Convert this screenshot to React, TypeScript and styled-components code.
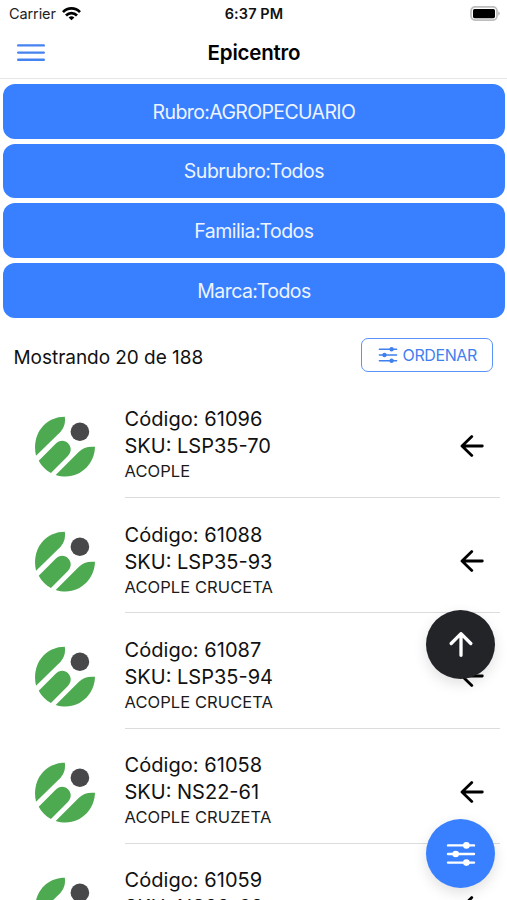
import React from "react";
import styled, { createGlobalStyle } from "styled-components";

const BLUE = "#3880ff";

const GlobalStyle = createGlobalStyle`
  * { box-sizing: border-box; }
  body { margin: 0; background: #fff; overflow: hidden; }
  button { font: inherit; margin: 0; padding: 0; cursor: pointer; }
  svg { display: block; flex: none; }
`;

const Screen = styled.div`
  position: relative;
  width: 100%;
  height: 900px;
  overflow: hidden;
  background: #fff;
  color: #111;
  font-family: Inter, "Liberation Sans", sans-serif;
`;

const StatusBar = styled.div`
  display: grid;
  grid-template-columns: 1fr auto 1fr;
  align-items: center;
  height: 27px;
  padding: 0 6px 0 9px;
`;

const Carrier = styled.div`
  display: flex;
  align-items: center;
  gap: 6px;
  font-size: 14.5px;
  letter-spacing: -0.1px;
  color: #222;
`;

const Clock = styled.div`
  margin-right: 2px;
  font-size: 14.5px;
  font-weight: 600;
  letter-spacing: 0.1px;
`;

const BatterySlot = styled.div`
  justify-self: end;
`;

const Toolbar = styled.header`
  display: grid;
  grid-template-columns: 1fr auto 1fr;
  align-items: center;
  height: 52px;
  padding: 0 17px;
  border-bottom: 1px solid #e6e6e8;
`;

const MenuButton = styled.button`
  justify-self: start;
  border: 0;
  background: none;
`;

const Title = styled.h1`
  margin: 0 0 0 1px;
  font-size: 20.5px;
  font-weight: 600;
  letter-spacing: -0.2px;
  color: #000;
`;

const Filters = styled.div`
  display: flex;
  flex-direction: column;
  gap: 5.1px;
  padding: 5px 2.5px 0 3.4px;
`;

const FilterButton = styled.button<{ $tracking: number }>`
  height: 54.6px;
  border: 0;
  border-radius: 12px;
  background: ${BLUE};
  color: #eef4ff;
  && { font-size: 19.5px; padding-top: 1px; }
  letter-spacing: ${(p) => p.$tracking}px;
`;

const Summary = styled.div`
  display: flex;
  align-items: center;
  justify-content: space-between;
  height: 64px;
  margin-top: 5.6px;
  padding: 0 14.5px 0 13.5px;
`;

const Count = styled.div`
  font-size: 19px;
  letter-spacing: -0.04px;
  padding-top: 4px;
`;

const SortButton = styled.button`
  display: flex;
  align-items: center;
  justify-content: center;
  gap: 5px;
  width: 131.5px;
  height: 34px;
  border: 1.5px solid #5b94f8;
  border-radius: 7px;
  background: #fff;
  color: #3f7fee;
  && { font-size: 16px; padding: 0 0 1px 1px; }
  letter-spacing: -0.4px;
`;

const List = styled.ul`
  list-style: none;
  margin: -4.3px 0 0;
  padding: 0;
`;

const Item = styled.li`
  display: flex;
  height: 115.2px;
  padding: 0 7px 0 34.5px;
`;

const LogoBox = styled.div`
  width: 90px;
  padding-top: 33px;
`;

const ItemBody = styled.div`
  display: flex;
  flex: 1;
  justify-content: space-between;
  padding: 23.4px 15.6px 0 0;
  border-bottom: 1px solid #dcdcde;
`;

const Line = styled.div<{ $tracking?: number }>`
  height: 27px;
  line-height: 27px;
  font-size: 20px;
  letter-spacing: ${(p) => p.$tracking ?? 0.05}px;
  white-space: nowrap;
`;

const Name = styled.div`
  height: 24px;
  line-height: 22.6px;
  font-size: 16.5px;
  letter-spacing: 0.08px;
  color: #1a1a1a;
`;

const ArrowBox = styled.div`
  padding-top: 28.6px;
`;

const Fab = styled.button<{ $top: number; $color: string }>`
  position: absolute;
  left: 426px;
  top: ${(p) => p.$top}px;
  width: 69px;
  height: 69px;
  display: flex;
  align-items: center;
  justify-content: center;
  border: 0;
  border-radius: 50%;
  background: ${(p) => p.$color};
  box-shadow: 0 5px 14px rgba(0, 0, 0, 0.12);
`;

const Wifi = () => (
  <svg width="19" height="14" viewBox="0 0 19 14" fill="none" stroke="#000" strokeWidth="2.7">
    <path d="M1 5.1C5.8 .2 13.2 .2 18 5.1" />
    <path d="M4 8.5C7.2 5.2 11.8 5.2 15 8.5" />
    <path d="M9.5 13.3 6.6 10.5Q9.5 8 12.4 10.5Z" fill="#000" stroke="none" />
  </svg>
);

const Battery = () => (
  <svg width="31" height="15" viewBox="0 0 31 15">
    <rect x="1" y=".9" width="26" height="13.2" rx="4" fill="#fff" stroke="#bdbdbd" strokeWidth="1.7" />
    <rect x="3" y="3" width="22" height="9.2" rx="1.6" fill="#000" />
    <path d="M28.4 5.3Q31 7.5 28.4 9.7Z" fill="#aaa" />
  </svg>
);

const MenuIcon = () => (
  <svg width="28" height="19" viewBox="0 0 28 19" stroke="#4483f1" strokeWidth="2.4" strokeLinecap="round">
    <path d="M1.2 2.4H26.8M1.2 9.6H26.8M1.2 16.8H26.8" />
  </svg>
);

const Options = ({ width, color, stroke = 2.4 }: { width: number; color: string; stroke?: number }) => (
  <svg width={width} height={(width * 24) / 30} viewBox="0 0 30 24" stroke={color} strokeWidth={stroke} strokeLinecap="round">
    <path d="M2 3.4H28M2 12H28M2 20.6H28" />
    <g fill={color} stroke="none">
      <circle cx="20.4" cy="3.4" r="3.3" />
      <circle cx="9.7" cy="12" r="3.3" />
      <circle cx="20.4" cy="20.6" r="3.3" />
    </g>
  </svg>
);

const Logo = () => (
  <svg width="61" height="61" viewBox="47 48 180 180">
    <path d="M50 165C36 105 74 50 135 50C138 76 128 89 115 102Z" fill="#4daa50" />
    <path d="M58 180 108 130C119 118 136 119 145 129C156 141 154 155 144 166L94 216C79 208 66 196 58 180Z" fill="#4daa50" />
    <path d="M108 222 176 154C188 142 203 137 224 139C223 193 173 242 108 222Z" fill="#4daa50" />
    <circle cx="179.5" cy="94.5" r="27.5" fill="#48484a" />
  </svg>
);

const BackArrow = () => (
  <svg width="24" height="22" viewBox="0 0 24 22" fill="none" stroke="#000" strokeWidth="2.8" strokeLinecap="round" strokeLinejoin="round">
    <path d="M11.8 1.6 2 11 11.8 20.4M2.5 11H22.3" />
  </svg>
);

const UpArrow = () => (
  <svg width="24" height="26" viewBox="0 0 24 26" fill="none" stroke="#fff" strokeWidth="3.3" strokeLinecap="round" strokeLinejoin="round">
    <path d="M2.2 11.5 12 1.7 21.8 11.5M12 2.3V23.3" />
  </svg>
);

const filters = [
  { label: "Rubro:AGROPECUARIO", tracking: -0.62 },
  { label: "Subrubro:Todos", tracking: -0.5 },
  { label: "Familia:Todos", tracking: -0.5 },
  { label: "Marca:Todos", tracking: -0.55 },
];

const products = [
  { code: "61096", sku: "LSP35-70", name: "ACOPLE" },
  { code: "61088", sku: "LSP35-93", name: "ACOPLE CRUCETA" },
  { code: "61087", sku: "LSP35-94", name: "ACOPLE CRUCETA" },
  { code: "61058", sku: "NS22-61", name: "ACOPLE CRUZETA" },
  { code: "61059", sku: "NS22-62", name: "ACOPLE CRUZETA" },
];

export default function App() {
  return (
    <Screen>
      <GlobalStyle />
      <StatusBar>
        <Carrier>
          Carrier <Wifi />
        </Carrier>
        <Clock>6:37 PM</Clock>
        <BatterySlot>
          <Battery />
        </BatterySlot>
      </StatusBar>
      <Toolbar>
        <MenuButton aria-label="Menú">
          <MenuIcon />
        </MenuButton>
        <Title>Epicentro</Title>
      </Toolbar>
      <Filters>
        {filters.map((f) => (
          <FilterButton key={f.label} $tracking={f.tracking}>
            {f.label}
          </FilterButton>
        ))}
      </Filters>
      <Summary>
        <Count>Mostrando 20 de 188</Count>
        <SortButton>
          <Options width={20} color="#3f7fee" stroke={2} />
          ORDENAR
        </SortButton>
      </Summary>
      <List>
        {products.map((p) => (
          <Item key={p.code}>
            <LogoBox>
              <Logo />
            </LogoBox>
            <ItemBody>
              <div>
                <Line>Código: {p.code}</Line>
                <Line $tracking={0}>SKU: {p.sku}</Line>
                <Name>{p.name}</Name>
              </div>
              <ArrowBox>
                <BackArrow />
              </ArrowBox>
            </ItemBody>
          </Item>
        ))}
      </List>
      <Fab $top={610} $color="#222428" aria-label="Subir">
        <UpArrow />
      </Fab>
      <Fab $top={819} $color={BLUE} aria-label="Filtrar">
        <Options width={30} color="#fff" />
      </Fab>
    </Screen>
  );
}
